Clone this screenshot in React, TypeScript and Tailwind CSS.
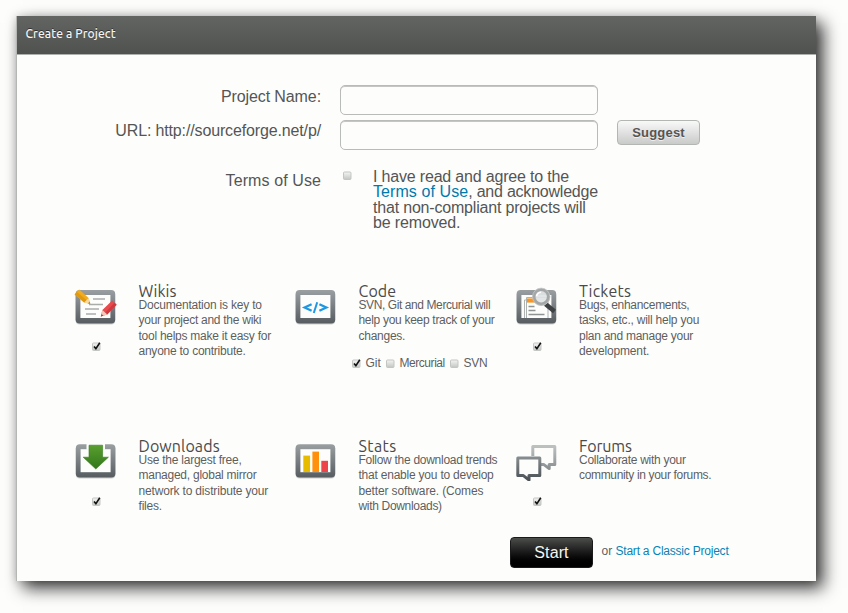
import React from "react";

const SANS = "font-['Liberation_Sans',Arial,sans-serif]";
const TITLE = "font-['Ubuntu','Noto_Sans','Open_Sans',sans-serif]";

function Check({ on = false }: { on?: boolean }) {
  return (
    <svg width="11" height="11" viewBox="0 0 11 11" className="block shrink-0">
      <defs>
        <linearGradient id="cb" x1="0" y1="0" x2="0" y2="1">
          <stop offset="0" stopColor="#f4f5f4" />
          <stop offset="1" stopColor="#c2c5c2" />
        </linearGradient>
      </defs>
      <rect x="1.5" y="2" width="7.5" height="7.5" rx="1" fill="url(#cb)" stroke="#c3c6c3" />
      {on && <path d="M3 5.4 L4.9 7.6 L8.8 1.8" fill="none" stroke="#111" strokeWidth="1.6" />}
    </svg>
  );
}

function Frame() {
  return (
    <>
      <defs>
        <linearGradient id="fr" x1="0" y1="0" x2="0" y2="1">
          <stop offset="0" stopColor="#9a9fa2" />
          <stop offset="1" stopColor="#565c60" />
        </linearGradient>
      </defs>
      <rect x="1.6" y="5" width="39.6" height="33.4" rx="4" fill="#000" opacity=".18" />
      <rect x="1.6" y="4" width="39.6" height="33.4" rx="4" fill="url(#fr)" />
      <rect x="6.4" y="9" width="30" height="23" fill="#fdfefc" />
    </>
  );
}

function WikiIcon() {
  return (
    <svg width="44" height="40" viewBox="0 0 44 40">
      <Frame />
      <path d="M19 13h12M15 18.5h14M11 23h14M12 28h10" stroke="#a9adaa" strokeWidth="1.5" />
      <path d="M.6 8.4 L5.2 3.6 L14.6 12 L16.3 18 L10.2 16.6Z" fill="#f2ab1c" />
      <path d="M.6 8.4 L3 6 L13 14.6 L10.2 16.6Z" fill="#e09a10" />
      <path d="M10.2 16.6 L14.6 12 L16.3 18Z" fill="#f7d9a4" />
      <path d="M14 17.4 L16.3 18 L15.6 15.6Z" fill="#c48312" />
      <path d="M38.2 14.4 L42.6 18.8 L33.2 28.6 L26.8 30.4 L28.4 24Z" fill="#e84a4d" />
      <path d="M42.6 18.8 L33.2 28.6 L31.2 26.6 L40.6 16.8Z" fill="#cf3a40" />
      <path d="M28.4 24 L33.2 28.6 L26.8 30.4Z" fill="#f3c9bc" />
      <path d="M27.6 28 L29.4 29.7 L26.8 30.4Z" fill="#c22f36" />
    </svg>
  );
}

function CodeIcon() {
  return (
    <svg width="44" height="40" viewBox="0 0 44 40">
      <Frame />
      <path d="M17.6 18.2 L10.6 21.5 L17.6 24.8 M25.4 18.2 L32.4 21.5 L25.4 24.8" fill="none" stroke="#1f97e2" strokeWidth="2.3" />
      <path d="M23.2 16.2 L19.8 27" stroke="#1f97e2" strokeWidth="2" />
    </svg>
  );
}

function TicketIcon() {
  return (
    <svg width="44" height="40" viewBox="0 0 44 40">
      <Frame />
      <path d="M9.5 32V14h2M11.5 32V11.5H33V32" fill="none" stroke="#aeb2b0" />
      <rect x="12" y="12.4" width="10" height="4.2" fill="#fb9421" />
      <path d="M13.5 20.5h6M13.5 24.5h7M13.5 28.5h16" stroke="#8f9492" strokeWidth="1.5" />
      <path d="M30.5 18 L39.5 25.6" stroke="#3e4244" strokeWidth="4.6" />
      <circle cx="26.2" cy="10.8" r="7.3" fill="#dfe4e4" fillOpacity=".92" stroke="#a3a7a8" strokeWidth="3.2" />
      <circle cx="26.2" cy="10.8" r="8.7" fill="none" stroke="#c5c8c8" strokeWidth=".8" />
      <path d="M21.5 10.2 A5 5 0 0 1 26 6.2" fill="none" stroke="#fff" strokeWidth="1.6" />
    </svg>
  );
}

function DownloadIcon() {
  return (
    <svg width="44" height="40" viewBox="0 0 44 40">
      <defs>
        <linearGradient id="gr" x1="0" y1="0" x2="0" y2="1">
          <stop offset="0" stopColor="#5a9f30" />
          <stop offset="1" stopColor="#317719" />
        </linearGradient>
      </defs>
      <g transform="translate(.2 -.8)">
        <Frame />
        <rect x="12.3" y="3.5" width="18.5" height="6" fill="#fdfefc" />
        <path d="M14.8 5 H28.4 V17 H34.2 L21.6 28.8 L9 17 H14.8Z" fill="url(#gr)" stroke="#39791f" strokeWidth=".6" />
      </g>
    </svg>
  );
}

function StatsIcon() {
  return (
    <svg width="44" height="40" viewBox="0 0 44 40">
      <g transform="translate(0 -.8)">
        <Frame />
        <rect x="9.3" y="15.4" width="6.8" height="16.4" fill="#e6bb00" />
        <rect x="18.4" y="11.4" width="6.6" height="20.4" fill="#ff900b" />
        <rect x="27.3" y="20.6" width="6.7" height="11.2" fill="#ed4349" />
      </g>
    </svg>
  );
}

function ForumIcon() {
  return (
    <svg width="44" height="40" viewBox="0 0 44 40">
      <defs>
        <linearGradient id="f1" x1="0" y1="0" x2="0" y2="1">
          <stop offset="0" stopColor="#bcc0bf" />
          <stop offset="1" stopColor="#8b9193" />
        </linearGradient>
        <linearGradient id="f2" x1="0" y1="0" x2="0" y2="1">
          <stop offset="0" stopColor="#868b8d" />
          <stop offset="1" stopColor="#4b5155" />
        </linearGradient>
      </defs>
      <path d="M17.8 15 V5.6 H39.8 V23.4 H34.2 V27.6 L28.6 23.4 H26" fill="#fdfefc" stroke="url(#f1)" strokeWidth="3" strokeLinejoin="round" />
      <path d="M2.8 17 H24.8 V34.6 H14 V39 L8.4 34.6 H2.8Z" fill="#fdfefc" stroke="url(#f2)" strokeWidth="3" strokeLinejoin="round" />
    </svg>
  );
}

type Line = [text: string, tracking: string];

type Feature = {
  title: string;
  tracking: string;
  icon: React.ReactNode;
  lines: Line[];
  check?: boolean;
  scm?: boolean;
};

const features: Feature[] = [
  {
    title: "Wikis", tracking: "tracking-[0px]", icon: <WikiIcon />, check: true,
    lines: [
      ["Documentation is key to", "tracking-[-0.21px]"],
      ["your project and the wiki", "tracking-[-0.27px]"],
      ["tool helps make it easy for", "tracking-[-0.26px]"],
      ["anyone to contribute.", "tracking-[-0.24px]"],
    ],
  },
  {
    title: "Code", tracking: "tracking-[0.1px]", icon: <CodeIcon />, scm: true,
    lines: [
      ["SVN, Git and Mercurial will", "tracking-[-0.41px]"],
      ["help you keep track of your", "tracking-[-0.3px]"],
      ["changes.", "tracking-[-0.25px]"],
    ],
  },
  {
    title: "Tickets", tracking: "tracking-[0.25px]", icon: <TicketIcon />, check: true,
    lines: [
      ["Bugs, enhancements,", "tracking-[-0.3px]"],
      ["tasks, etc., will help you", "tracking-[-0.23px]"],
      ["plan and manage your", "tracking-[-0.27px]"],
      ["development.", "tracking-[-0.15px]"],
    ],
  },
  {
    title: "Downloads", tracking: "tracking-[0.1px]", icon: <DownloadIcon />, check: true,
    lines: [
      ["Use the largest free,", "tracking-[-0.24px]"],
      ["managed, global mirror", "tracking-[-0.25px]"],
      ["network to distribute your", "tracking-[-0.17px]"],
      ["files.", "tracking-[-0.2px]"],
    ],
  },
  {
    title: "Stats", tracking: "tracking-[0.4px]", icon: <StatsIcon />,
    lines: [
      ["Follow the download trends", "tracking-[-0.28px]"],
      ["that enable you to develop", "tracking-[-0.22px]"],
      ["better software. (Comes", "tracking-[-0.14px]"],
      ["with Downloads)", "tracking-[-0.32px]"],
    ],
  },
  {
    title: "Forums", tracking: "tracking-[-0.15px]", icon: <ForumIcon />, check: true,
    lines: [
      ["Collaborate with your", "tracking-[-0.29px]"],
      ["community in your forums.", "tracking-[-0.34px]"],
    ],
  },
];

function FeatureCell({ f }: { f: Feature }) {
  return (
    <div className="flex h-[155px]">
      <div className="flex w-16 shrink-0 flex-col">
        {f.icon}
        {f.check && (
          <div className="mt-[15px] ml-[17px]">
            <Check on />
          </div>
        )}
      </div>
      <div className="pl-[0.5px]">
        <h2 className={`${TITLE} ${f.tracking} -mt-px h-[13px] text-[16px] leading-[12px] text-[#4a4a4a]`}>{f.title}</h2>
        <p className="text-[12px] leading-[15.3px] text-[#5f5f5f]">
          {f.lines.map(([text, tracking]) => (
            <span key={text} className={`${tracking} block whitespace-nowrap`}>{text}</span>
          ))}
        </p>
        {f.scm && (
          <div className="mt-[12px] -ml-[8px] flex items-center text-[12px] leading-[15px] text-[#5f5f5f]">
            <Check on />
            <span className="ml-[4px] w-[19px]">Git</span>
            <Check />
            <span className="ml-[4px] w-[49px] tracking-[-0.45px]">Mercurial</span>
            <Check />
            <span className="ml-[4px] tracking-[-0.3px]">SVN</span>
          </div>
        )}
      </div>
    </div>
  );
}

const field = "h-[30px] w-[258px] rounded-[5px] border border-[#b9bbb9] bg-[#fdfefc] shadow-[inset_0_1px_0_#c4c6c4] outline-none";

export default function App() {
  return (
    <div className={`${SANS} h-[613px] w-[848px] overflow-hidden bg-[#fdfefc] pt-4 pl-4`}>
      <div className="flex h-[565px] w-[800px] flex-col border-l border-[#b5b7b5] bg-[#fdfefc] shadow-[7px_7px_16px_rgba(0,0,0,0.8),0_0_8px_rgba(0,0,0,0.15)]">
        <header className="flex h-[39px] items-center border-b border-[#aeb0ae] bg-linear-to-b from-[#636562] to-[#50524f] pb-[2px] pl-[8.5px]">
          <h1 className={`${TITLE} text-[12px] font-medium tracking-[0.12px] text-[#f4f5f3] [text-shadow:0_-1px_0_#333]`}>Create a Project</h1>
        </header>

        <form className="flex h-[231px] flex-col pt-[30px] text-[16px] text-[#555]">
          <div className="flex h-[35px]">
            <label className="mr-[19px] w-[304px] pt-[3px] text-right leading-[18px] tracking-[-0.1px]">Project Name:</label>
            <input className={field} />
          </div>
          <div className="flex h-[35px]">
            <label className="mr-[19px] w-[304px] pt-[2px] text-right leading-[18px] tracking-[-0.14px]">URL: http://sourceforge.net/p/</label>
            <input className={field} />
            <button type="button" className="ml-[19px] h-[25px] w-[83px] rounded-[4px] border border-[#b4b6b4] bg-linear-to-b from-[#f8f9f8] to-[#c9cbc9] text-[13px] leading-[22px] font-bold tracking-[0.2px] text-[#555] [text-shadow:0_1px_0_#eee]">
              Suggest
            </button>
          </div>
          <div className="flex pt-[14px]">
            <label className="w-[304px] pt-[3px] text-right leading-[18px] tracking-[0.1px]">Terms of Use</label>
            <div className="mt-[1px] ml-[21px]">
              <Check />
            </div>
            <p className="ml-[20px] text-[16px] leading-[15.3px] whitespace-nowrap">
              <span className="block tracking-[-0.18px]">I have read and agree to the</span>
              <span className="block tracking-[-0.12px]">
                <a className="tracking-[0.08px] text-[#0079ad]">Terms of Use</a>
                <span className="tracking-[-0.22px]">, and acknowledge</span>
              </span>
              <span className="block tracking-[-0.19px]">that non-compliant projects will</span>
              <span className="block tracking-[-0.15px]">be removed.</span>
            </p>
          </div>
        </form>

        <section className="grid grid-cols-[220px_220.5px_220px] pl-[57px]">
          {features.map((f) => (
            <FeatureCell key={f.title} f={f} />
          ))}
        </section>

        <footer className="-mt-[59px] flex pl-[493px]">
          <button type="button" className="h-[31px] w-[83px] rounded-[4px] border border-[#1a1a1a] bg-linear-to-b from-[#4c4e4c] to-black text-[16px] tracking-[0.1px] text-[#f4f5f3]">
            Start
          </button>
          <p className="ml-[8.5px] pt-[7px] text-[12px] leading-[15px] whitespace-nowrap text-[#5f5f5f]">
            or <a className="tracking-[-0.22px] text-[#0a82b5]">Start a Classic Project</a>
          </p>
        </footer>
      </div>
    </div>
  );
}
